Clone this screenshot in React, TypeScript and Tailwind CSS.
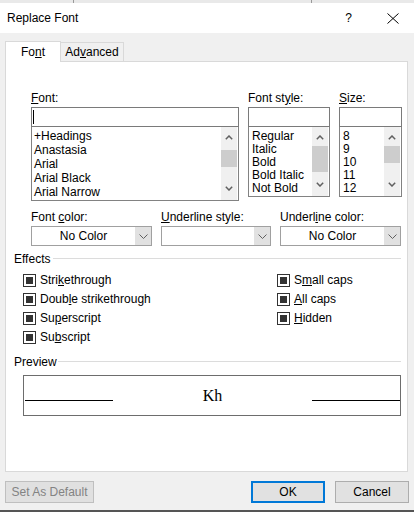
import React from "react";

const Up = () => (
  <svg width="8" height="5" viewBox="0 0 8 5">
    <path d="M0.8 4.2 L4 1 L7.2 4.2" fill="none" stroke="#606060" strokeWidth="1.5" />
  </svg>
);
const Down = () => (
  <svg width="8" height="5" viewBox="0 0 8 5">
    <path d="M0.8 0.8 L4 4 L7.2 0.8" fill="none" stroke="#606060" strokeWidth="1.5" />
  </svg>
);
const DropChev = () => (
  <svg width="9" height="5" viewBox="0 0 9 5">
    <path d="M0.5 0.5 L4.5 4.5 L8.5 0.5" fill="none" stroke="#606060" strokeWidth="1" />
  </svg>
);

function Scroll({ thumb }: { thumb: string }) {
  return (
    <div className="w-[16px] bg-[#f0f0f0] flex flex-col items-center pt-[8px] pb-[9px] mr-[1px]">
      <Up />
      <div className={`w-full bg-[#cdcdcd] ${thumb}`} />
      <div className="flex-1" />
      <Down />
    </div>
  );
}

function Dropdown({ text }: { text?: string }) {
  return (
    <div className="h-[20px] border border-[#a0a0a0] bg-white flex">
      <div className="flex-1 flex items-center justify-center leading-[15px]">{text}</div>
      <div className="w-[16px] bg-[#e1e1e1] flex items-center justify-center">
        <DropChev />
      </div>
    </div>
  );
}

function Check({ children }: { children: React.ReactNode }) {
  return (
    <div className="h-[19px] flex items-center">
      <div className="w-[13px] h-[13px] border border-[#333333] bg-white flex items-center justify-center">
        <div className="w-[7px] h-[7px] bg-[#333333]" />
      </div>
      <span className="ml-[4px] leading-[15px]">{children}</span>
    </div>
  );
}

export default function App() {
  return (
    <div className="w-[414px] h-[512px] bg-[#f0f0f0] flex flex-col overflow-hidden font-['Liberation_Sans',Arial,sans-serif] text-[12px] text-black leading-[15px]">
      {/* top strip */}
      <div className="h-[3px] bg-[#e9e9e9] flex shrink-0">
        <div className="w-[73px]" />
        <div className="w-px bg-[#9a9a9a]" />
        <div className="w-[237px]" />
        <div className="w-px bg-[#9a9a9a]" />
      </div>
      {/* title bar */}
      <div className="h-[30px] bg-white flex items-center pl-[7px] shrink-0">
        <span>Replace Font</span>
        <span className="ml-auto">?</span>
        <svg className="ml-[35px] mr-[15px]" width="12" height="11" viewBox="0 0 12 11">
          <path d="M0.5 0.5 L11.5 10.5 M11.5 0.5 L0.5 10.5" stroke="#000" strokeWidth="1" fill="none" />
        </svg>
      </div>
      {/* body */}
      <div className="flex-1 flex flex-col px-[5px] pt-[8px]">
        {/* tabs */}
        <div className="flex items-end">
          <div className="relative z-10 -mb-px w-[56px] h-[21px] bg-white border border-b-0 border-[#d9d9d9] pt-[3px] text-center">
            Fo<u>n</u>t
          </div>
          <div className="w-[63px] h-[19px] border border-l-0 border-b-0 border-[#d9d9d9] pt-[2px] text-center">
            Ad<u>v</u>anced
          </div>
        </div>
        {/* panel */}
        <div className="w-[403px] h-[411px] border border-[#d9d9d9] bg-white pt-[28px] flex flex-col">
          {/* lists row */}
          <div className="flex items-start pl-[25px]">
            <div className="w-[208px]">
              <div className="h-[17px] leading-[17px]">
                <u>F</u>ont:
              </div>
              <div className="h-[20px] border border-[#7a7a7a] flex items-center pl-[1px]">
                <div className="w-px h-[14px] bg-black" />
              </div>
              <div className="h-[74px] border border-t-0 border-[#828282] flex">
                <div className="flex-1 pl-[2px] pt-[2px] leading-[14px]">
                  <div>+Headings</div>
                  <div>Anastasia</div>
                  <div>Arial</div>
                  <div>Arial Black</div>
                  <div>Arial Narrow</div>
                </div>
                <Scroll thumb="mt-[10px] h-[17px]" />
              </div>
            </div>
            <div className="w-[82px] ml-[9px]">
              <div className="h-[17px] leading-[17px]">
                Font st<u>y</u>le:
              </div>
              <div className="h-[20px] border border-[#7a7a7a]" />
              <div className="h-[70px] border border-t-0 border-[#828282] flex">
                <div className="flex-1 pl-[3px] pt-[3px] leading-[13px]">
                  <div>Regular</div>
                  <div>Italic</div>
                  <div>Bold</div>
                  <div>Bold Italic</div>
                  <div>Not Bold</div>
                </div>
                <Scroll thumb="mt-[6px] h-[26px]" />
              </div>
            </div>
            <div className="w-[63px] ml-[9px]">
              <div className="h-[17px] leading-[17px]">
                <u>S</u>ize:
              </div>
              <div className="h-[20px] border border-[#7a7a7a]" />
              <div className="h-[70px] border border-t-0 border-[#828282] flex">
                <div className="flex-1 pl-[3px] pt-[3px] leading-[13px]">
                  <div>8</div>
                  <div>9</div>
                  <div>10</div>
                  <div>11</div>
                  <div>12</div>
                </div>
                <Scroll thumb="mt-[6px] h-[17px]" />
              </div>
            </div>
          </div>
          {/* dropdown row */}
          <div className="flex items-start pl-[25px] mt-[8px]">
            <div className="w-[121px]">
              <div className="h-[17px] leading-[17px]">
                Font <u>c</u>olor:
              </div>
              <Dropdown text="No Color" />
            </div>
            <div className="w-[110px] ml-[9px]">
              <div className="h-[17px] leading-[17px]">
                <u>U</u>nderline style:
              </div>
              <Dropdown />
            </div>
            <div className="w-[121px] ml-[9px]">
              <div className="h-[17px] leading-[17px]">
                Underl<u>i</u>ne color:
              </div>
              <Dropdown text="No Color" />
            </div>
          </div>
          {/* effects */}
          <div className="flex items-center pl-[8px] pr-[6px] mt-[5px] h-[17px]">
            <span className="w-[39px] leading-[17px]">Effects</span>
            <div className="flex-1 h-px bg-[#dcdcdc] mb-[2px]" />
          </div>
          <div className="flex pl-[17px] mt-[3px]">
            <div className="w-[254px] flex flex-col">
              <Check>
                Stri<u>k</u>ethrough
              </Check>
              <Check>
                Doub<u>l</u>e strikethrough
              </Check>
              <Check>
                Su<u>p</u>erscript
              </Check>
              <Check>
                Su<u>b</u>script
              </Check>
            </div>
            <div className="flex flex-col">
              <Check>
                S<u>m</u>all caps
              </Check>
              <Check>
                <u>A</u>ll caps
              </Check>
              <Check>
                <u>H</u>idden
              </Check>
            </div>
          </div>
          {/* preview */}
          <div className="flex items-center pl-[8px] pr-[6px] mt-[7px] h-[17px]">
            <span className="w-[44px] leading-[17px]">Preview</span>
            <div className="flex-1 h-px bg-[#dcdcdc] mb-[2px]" />
          </div>
          <div className="ml-[17px] mt-[4px] w-[378px] h-[41px] border border-[#6d6d6d] flex items-start pl-[1px]">
            <div className="w-[88px] h-px bg-black mt-[24px]" />
            <div className="flex-1 text-center mt-[12px] text-[16px] leading-[16px] font-['Liberation_Serif','Times_New_Roman',serif]">
              Kh
            </div>
            <div className="w-[88px] h-px bg-black mt-[24px]" />
          </div>
        </div>
        {/* buttons */}
        <div className="flex mt-[9px]">
          <div className="w-[89px] h-[22px] bg-[#e0e0e0] border border-[#bfbfbf] text-[#838383] flex items-center justify-center">
            Set As Default
          </div>
          <div className="ml-auto w-[74px] h-[22px] bg-[#e1e1e1] border-2 border-[#0078d7] flex items-center justify-center">
            OK
          </div>
          <div className="ml-[10px] w-[74px] h-[22px] bg-[#e1e1e1] border border-[#adadad] flex items-center justify-center">
            Cancel
          </div>
        </div>
      </div>
      <div className="h-[2px] bg-[#555555] shrink-0" />
    </div>
  );
}
